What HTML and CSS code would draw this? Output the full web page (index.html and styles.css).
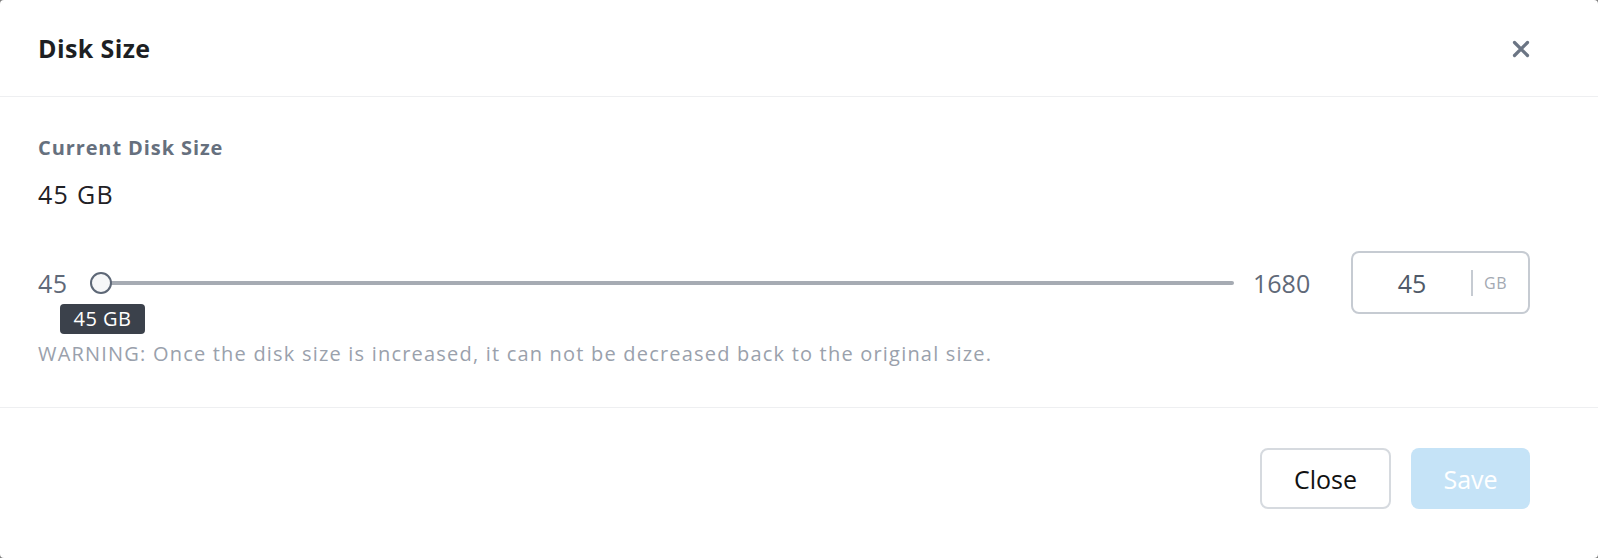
FILE: index.html
```html
<!DOCTYPE html>
<html lang="en">
<head>
    <meta charset="UTF-8">
    <meta name="viewport" content="width=device-width, initial-scale=1.0">
    <title>Disk Size</title>
    <link rel="stylesheet" href="styles.css">
</head>
<body>

    <!-- modal -->
    <div class="modal">
        <div class="modal-header">
            <h2 class="modal-title">Disk Size</h2>
            <button class="close-x" aria-label="Close">
                <svg width="18" height="18" viewBox="0 0 18 18">
                    <path d="M2.5 2.5 L15.5 15.5 M15.5 2.5 L2.5 15.5" stroke="#6b7584" stroke-width="3.2" stroke-linecap="round"/>
                </svg>
            </button>
        </div>

        <div class="modal-body">
            <div class="label">Current Disk Size</div>
            <div class="current">45 GB</div>

            <div class="slider-row">
                <span class="limit">45</span>
                <div class="slider">
                    <div class="track"></div>
                    <div class="thumb"></div>
                    <div class="tip">45 GB</div>
                </div>
                <span class="limit max">1680</span>
                <div class="size-input">
                    <span class="value">45</span>
                    <span class="unit">GB</span>
                </div>
            </div>

            <div class="warning">WARNING: Once the disk size is increased, it can not be decreased back to the original size.</div>
        </div>

        <div class="modal-footer">
            <button class="btn btn-close">Close</button>
            <button class="btn btn-save" disabled>Save</button>
        </div>
    </div>

</body>
</html>
```

FILE: styles.css
```css
* {
    margin: 0;
    padding: 0;
    box-sizing: border-box;
}

body {
    background: #7d7d7d;
    font-family: 'Open Sans', 'Liberation Sans', sans-serif;
    color: #222;
}

.modal {
    width: 1598px;
    height: 558px;
    background: #fff;
    border-radius: 4px;
    display: flex;
    flex-direction: column;
}

/* header */
.modal-header {
    height: 97px;
    padding: 0 68px 0 38px;
    display: flex;
    align-items: center;
    justify-content: space-between;
    border-bottom: 1px solid #eeeff1;
}

.modal-title {
    font-size: 25px;
    line-height: 30px;
    font-weight: bold;
    letter-spacing: 0.4px;
    color: #1d1f23;
}

.close-x {
    background: none;
    border: none;
    width: 18px;
    height: 18px;
    cursor: pointer;
    margin-top: 2px;
}

/* body */
.modal-body {
    height: 311px;
    padding: 0 68px 0 38px;
    border-bottom: 1px solid #eeeff1;
}

.label {
    margin-top: 39px;
    font-size: 20px;
    line-height: 24px;
    font-weight: bold;
    letter-spacing: 0.9px;
    color: #66707e;
}

.current {
    margin-top: 19px;
    font-size: 25px;
    line-height: 30px;
    letter-spacing: 1.3px;
    color: #1f2125;
}

.slider-row {
    margin-top: 42px;
    display: flex;
    align-items: center;
    height: 63px;
}

.limit {
    font-size: 25px;
    color: #5f6978;
    width: 52px;
    letter-spacing: 0.5px;
}

.limit.max {
    width: 117px;
    padding-left: 19px;
    letter-spacing: 0;
}

.slider {
    flex: 1;
    position: relative;
    height: 22px;
}

.track {
    margin-left: 11px;
    margin-top: 9px;
    height: 4px;
    border-radius: 2px;
    background: #a6abb3;
}

.thumb {
    position: absolute;
    left: 0;
    top: 0;
    width: 22px;
    height: 22px;
    border-radius: 50%;
    border: 2px solid #5d6776;
    background: #f6f7f8;
}

.tip {
    position: absolute;
    left: -30px;
    top: 32px;
    width: 85px;
    height: 30px;
    border-radius: 4px;
    background: #3b414b;
    color: #fff;
    font-size: 20px;
    line-height: 30px;
    letter-spacing: 0.5px;
    text-align: center;
}

.size-input {
    width: 179px;
    height: 63px;
    border: 2px solid #c6cbd2;
    border-radius: 8px;
    display: flex;
    align-items: center;
}

.size-input .value {
    flex: 1;
    text-align: center;
    font-size: 25px;
    color: #4f5968;
}

.size-input .unit {
    border-left: 2px solid #c6cbd2;
    height: 26px;
    line-height: 26px;
    padding: 0 21px 0 11px;
    font-size: 16px;
    letter-spacing: 0.5px;
    color: #a3a9b2;
}

.warning {
    margin-top: 27px;
    font-size: 20px;
    line-height: 26px;
    letter-spacing: 1.2px;
    color: #9aa1ac;
}

/* footer */
.modal-footer {
    flex: 1;
    padding: 40px 68px 0 38px;
    display: flex;
    justify-content: flex-end;
    gap: 20px;
}

.btn {
    height: 61px;
    border-radius: 8px;
    font-family: inherit;
    font-size: 25px;
    cursor: pointer;
}

.btn-close {
    width: 131px;
    background: #fff;
    border: 2px solid #d6dadf;
    color: #111;
}

.btn-save {
    width: 119px;
    background: #c5e3f7;
    border: none;
    color: #fff;
    cursor: default;
}
```
